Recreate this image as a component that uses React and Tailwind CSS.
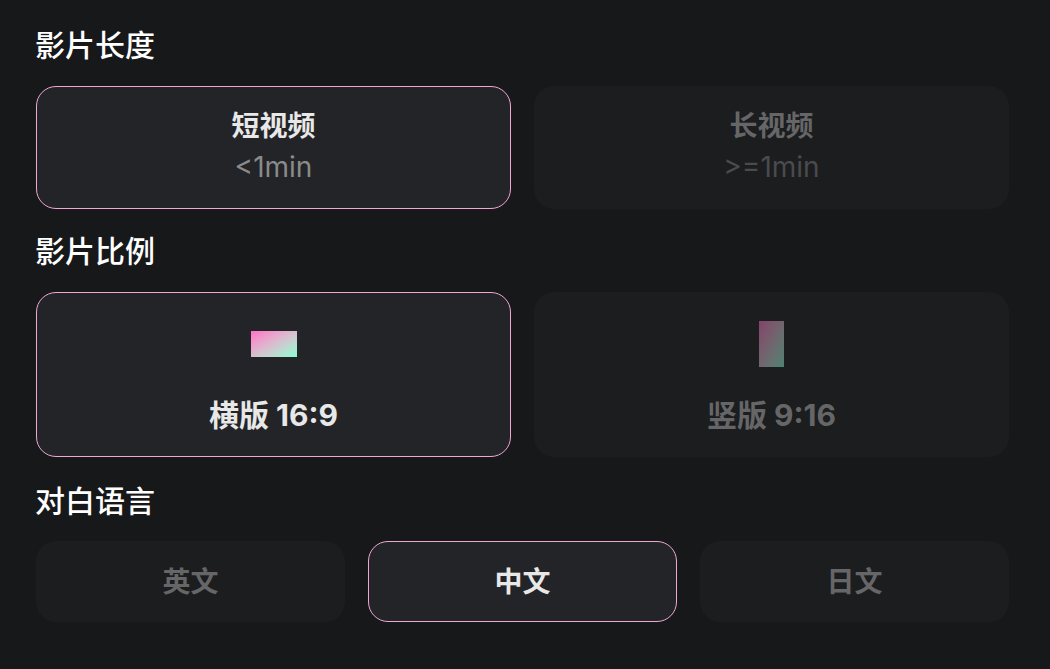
const FONT = { fontFamily: '"Inter", "Noto Sans CJK SC", sans-serif' }

function Heading({ children, className = '' }) {
  return <h2 className={`text-[30px] leading-[42px] font-medium text-white ${className}`}>{children}</h2>
}

function Card({ active, className = '', children }) {
  return (
    <div
      className={`rounded-[20px] flex flex-col items-center justify-center ${
        active ? 'bg-[#232427] border border-[#f2a6d4]' : 'bg-[#1c1d1f] border border-transparent'
      } ${className}`}
    >
      {children}
    </div>
  )
}

export default function App() {
  return (
    <div className="min-h-screen bg-[#17181a] pl-[35px] pr-[41px] pt-6" style={FONT}>
      <Heading>影片长度</Heading>
      <div className="grid grid-cols-2 gap-[23px] mt-5 pl-px">
        <Card active className="h-[123px] gap-[3px] pb-[3px]">
          <div className="text-[28px] leading-[38px] font-bold text-[#e8e8e8]">短视频</div>
          <div className="text-[28px] leading-[38px] text-[#8a8a8a]">&lt;1min</div>
        </Card>
        <Card className="h-[123px] gap-[3px] pb-[3px]">
          <div className="text-[28px] leading-[38px] font-bold text-[#666668]">长视频</div>
          <div className="text-[28px] leading-[38px] text-[#4a4b4d]">&gt;=1min</div>
        </Card>
      </div>

      <Heading className="mt-[21px]">影片比例</Heading>
      <div className="grid grid-cols-2 gap-[23px] mt-5 pl-px">
        <Card active className="h-[165px] gap-[30px] pt-[5px]">
          <div className="h-[46px] flex items-center">
            <div className="w-[46px] h-[26px] bg-gradient-to-br from-[#ff6ec7] to-[#7fffd4]" />
          </div>
          <div className="text-[30px] leading-[36px] font-bold text-[#e8e8e8]">横版 16:9</div>
        </Card>
        <Card className="h-[165px] gap-[30px] pt-[5px]">
          <div className="h-[46px] flex items-center">
            <div className="w-[25px] h-[46px] bg-gradient-to-br from-[#ff6ec7] to-[#7fffd4] opacity-45" />
          </div>
          <div className="text-[30px] leading-[36px] font-bold text-[#666668]">竖版 9:16</div>
        </Card>
      </div>

      <Heading className="mt-[23px]">对白语言</Heading>
      <div className="grid grid-cols-3 gap-[23px] mt-[19px] pl-px">
        <Card className="h-[81px]">
          <div className="text-[28px] font-bold text-[#666668]">英文</div>
        </Card>
        <Card active className="h-[81px]">
          <div className="text-[28px] font-bold text-[#e8e8e8]">中文</div>
        </Card>
        <Card className="h-[81px]">
          <div className="text-[28px] font-bold text-[#666668]">日文</div>
        </Card>
      </div>
    </div>
  )
}
